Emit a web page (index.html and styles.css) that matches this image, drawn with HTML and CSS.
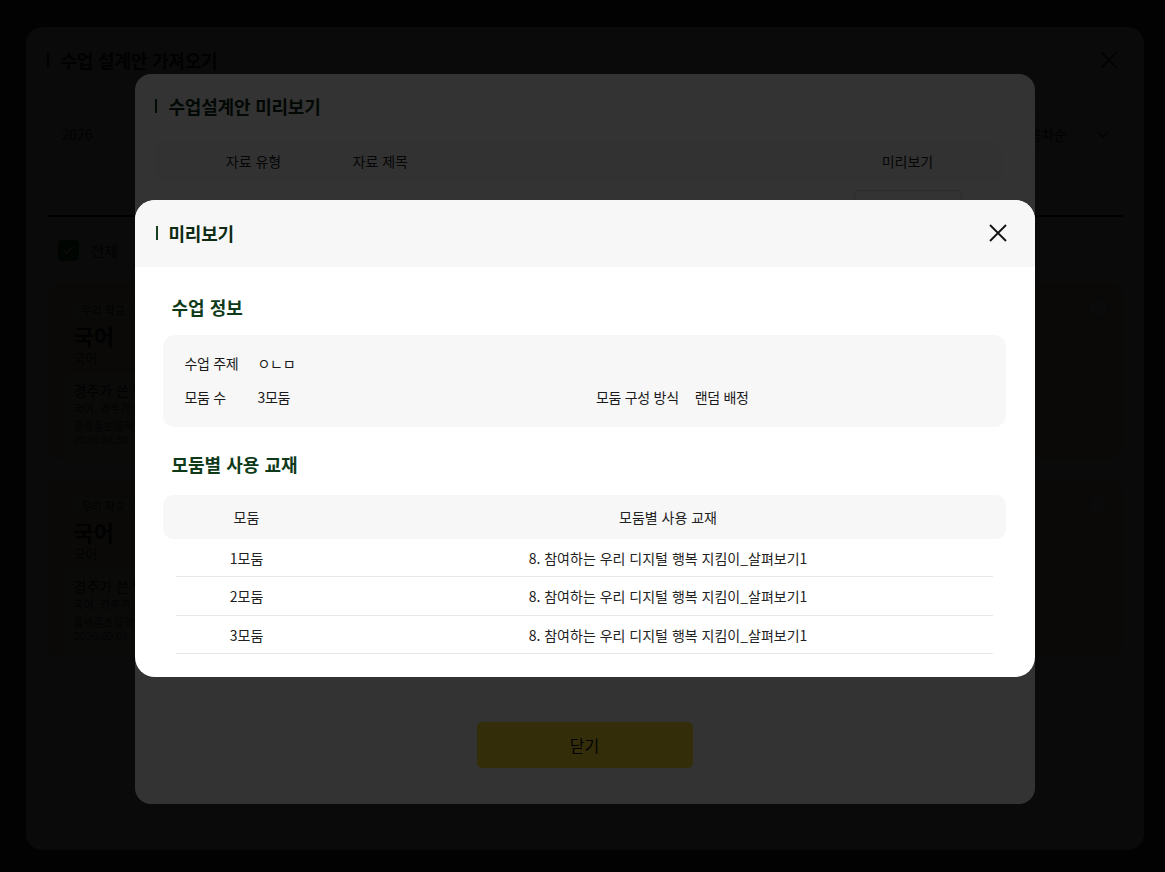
FILE: index.html
```html
<!DOCTYPE html>
<html lang="ko">
<head>
    <meta charset="UTF-8">
    <meta name="viewport" content="width=device-width, initial-scale=1.0">
    <title>수업 설계안 가져오기</title>
    <link rel="stylesheet" href="styles.css">
</head>
<body>

    <!-- 1단계: 수업 설계안 가져오기 -->
    <div class="dim">
        <section class="modal modal-import">
            <div class="modal-head">
                <h2 class="modal-title">수업 설계안 가져오기</h2>
                <button class="btn-close">
                    <svg width="18" height="18" viewBox="0 0 18 18"><path d="M1 1L17 17M17 1L1 17" stroke="#222" stroke-width="1.6" fill="none"/></svg>
                </button>
            </div>

            <div class="filters">
                <div class="select select-year">
                    <span>2026</span>
                    <svg width="14" height="14" viewBox="0 0 14 14"><path d="M2 5l5 5 5-5" stroke="#444" stroke-width="1.4" fill="none"/></svg>
                </div>
                <div class="select select-sort">
                    <span>오름차순</span>
                    <svg width="14" height="14" viewBox="0 0 14 14"><path d="M2 5l5 5 5-5" stroke="#444" stroke-width="1.4" fill="none"/></svg>
                </div>
            </div>

            <div class="tab-line"></div>

            <label class="check-all">
                <span class="check-box">
                    <svg width="14" height="14" viewBox="0 0 14 14"><path d="M2.5 7.2l3 3 6-6.4" stroke="#fff" stroke-width="1.8" fill="none"/></svg>
                </span>
                전체
            </label>

            <ul class="plan-list">
                <li class="plan-card">
                    <span class="plan-tag">우리 학교</span>
                    <p class="plan-subject">국어</p>
                    <p class="plan-sub">국어</p>
                    <div class="plan-detail">
                        <p class="plan-name">경주가 쓴 편지 읽기</p>
                        <p class="plan-desc">국어. 경주가 쓴 편지를 읽고 마음 나누기</p>
                        <p class="plan-meta">플랫폼초등학교<br>2026.04.30</p>
                    </div>
                    <span class="plan-radio"></span>
                </li>
                <li class="plan-card">
                    <span class="plan-tag">우리 학교</span>
                    <p class="plan-subject">국어</p>
                    <p class="plan-sub">국어</p>
                    <div class="plan-detail">
                        <p class="plan-name">경주가 쓴 일기 읽기</p>
                        <p class="plan-desc">국어. 경주가 쓴 일기를 읽고 생각 말하기</p>
                        <p class="plan-meta">플랫폼초등학교<br>2026.05.01</p>
                    </div>
                    <span class="plan-radio"></span>
                </li>
            </ul>
        </section>
    </div>

    <!-- 2단계: 수업설계안 미리보기 -->
    <div class="dim">
        <section class="modal modal-plan">
            <div class="plan-body">
                <h2 class="modal-title">수업설계안 미리보기</h2>

                <div class="file-head">
                    <span class="col-type">자료 유형</span>
                    <span class="col-title">자료 제목</span>
                    <span class="col-view">미리보기</span>
                </div>
                <div class="file-row">
                    <span class="col-type">교과서</span>
                    <span class="col-title">8. 참여하는 우리 디지털 행복 지킴이_살펴보기1</span>
                    <span class="col-view"><button class="btn-outline">미리보기</button></span>
                </div>
            </div>
            <div class="plan-foot">
                <button class="btn-yellow">닫기</button>
            </div>
        </section>
    </div>

    <!-- 3단계: 미리보기 -->
    <div class="dim">
        <section class="modal modal-preview">
            <div class="preview-head">
                <h2 class="modal-title">미리보기</h2>
                <button class="btn-close">
                    <svg width="18" height="18" viewBox="0 0 18 18"><path d="M1 1L17 17M17 1L1 17" stroke="#111" stroke-width="1.8" fill="none"/></svg>
                </button>
            </div>

            <div class="preview-body">
                <h3 class="section-title">수업 정보</h3>
                <div class="info-box">
                    <div class="info-item">
                        <span class="info-label">수업 주제</span>
                        <span class="info-value">ㅇㄴㅁ</span>
                    </div>
                    <div class="info-item"></div>
                    <div class="info-item">
                        <span class="info-label">모둠 수</span>
                        <span class="info-value">3모둠</span>
                    </div>
                    <div class="info-item">
                        <span class="info-label">모둠 구성 방식</span>
                        <span class="info-value">랜덤 배정</span>
                    </div>
                </div>

                <h3 class="section-title section-gap">모둠별 사용 교재</h3>
                <div class="group-table">
                    <div class="group-head">
                        <span>모둠</span>
                        <span>모둠별 사용 교재</span>
                    </div>
                    <div class="group-row">
                        <span>1모둠</span>
                        <span>8. 참여하는 우리 디지털 행복 지킴이_살펴보기1</span>
                    </div>
                    <div class="group-row">
                        <span>2모둠</span>
                        <span>8. 참여하는 우리 디지털 행복 지킴이_살펴보기1</span>
                    </div>
                    <div class="group-row">
                        <span>3모둠</span>
                        <span>8. 참여하는 우리 디지털 행복 지킴이_살펴보기1</span>
                    </div>
                </div>
            </div>
        </section>
    </div>

</body>
</html>
```

FILE: styles.css
```css
* {
    margin: 0;
    padding: 0;
    box-sizing: border-box;
    font-family: "Noto Sans CJK KR", "Noto Sans", sans-serif;
}

body {
    background-color: #fff;
    color: #222;
}

ul {
    list-style: none;
}

button {
    border: none;
    background: none;
    cursor: pointer;
}

/* 모달 뒤 어두운 배경 */
.dim {
    position: fixed;
    top: 0;
    left: 0;
    width: 100%;
    height: 100%;
    background-color: rgba(0, 0, 0, 0.8);
    display: flex;
    align-items: center;
    justify-content: center;
    padding: 5px 0 0 4px;
}

.modal {
    background-color: #fff;
    overflow: hidden;
}

.modal-title {
    display: flex;
    align-items: center;
    font-size: 18px;
    font-weight: 700;
    line-height: 24px;
    color: #0e2a13;
    letter-spacing: -0.2px;
}

.modal-title::before {
    content: "";
    width: 2px;
    height: 14px;
    background-color: #173f1f;
    margin-right: 12px;
}

.btn-close {
    width: 18px;
    height: 18px;
    display: flex;
}

/* 수업 설계안 가져오기 */
.modal-import {
    width: 1118px;
    height: 823px;
    border-radius: 16px;
    padding: 21px 21px 0 21px;
}

.modal-import .modal-head {
    display: flex;
    justify-content: space-between;
    align-items: center;
    height: 24px;
}

.modal-import .btn-close {
    margin-right: 5px;
}

.filters {
    display: flex;
    justify-content: space-between;
    margin-top: 44px;
}

.select {
    height: 36px;
    border: 1px solid #e3e3e3;
    border-radius: 6px;
    display: flex;
    align-items: center;
    justify-content: space-between;
    padding: 0 12px 0 14px;
    font-size: 14px;
    color: #333;
}

.select-year {
    width: 200px;
}

.select-sort {
    width: 122px;
}

.tab-line {
    height: 2px;
    background-color: #173f1f;
    margin-top: 63px;
}

.check-all {
    display: flex;
    align-items: center;
    gap: 12px;
    margin-top: 22px;
    padding-left: 11px;
    font-size: 15px;
    color: #333;
    height: 22px;
}

.check-box {
    width: 21px;
    height: 21px;
    border-radius: 4px;
    background-color: #1f8a3e;
    display: flex;
    align-items: center;
    justify-content: center;
}

.plan-list {
    display: flex;
    flex-direction: column;
    gap: 20px;
    margin-top: 22px;
}

.plan-card {
    position: relative;
    height: 176px;
    background-color: #fff6cf;
    border: 1px solid #f3e39a;
    border-radius: 12px;
    padding: 12px 16px;
}

.plan-tag {
    display: inline-block;
    font-size: 11px;
    line-height: 16px;
    padding: 0 9px;
    background-color: #fffbe9;
    border-radius: 4px;
    color: #444;
    margin-left: 9px;
}

.plan-subject {
    font-size: 22px;
    font-weight: 700;
    line-height: 30px;
    padding-left: 10px;
}

.plan-sub {
    font-size: 13px;
    line-height: 16px;
    padding-left: 10px;
    color: #444;
}

.plan-detail {
    margin-top: 6px;
    background-color: #fffbe8;
    border-radius: 8px;
    padding: 8px 10px;
    width: 260px;
    height: 90px;
}

.plan-name {
    font-size: 14px;
    line-height: 20px;
}

.plan-desc {
    font-size: 11px;
    line-height: 16px;
    color: #555;
}

.plan-meta {
    margin-top: 4px;
    font-size: 11px;
    line-height: 13px;
    color: #666;
}

.plan-radio {
    position: absolute;
    top: 14px;
    right: 13px;
    width: 21px;
    height: 21px;
    border: 1px solid #bbb;
    border-radius: 50%;
    background-color: #fff;
}

/* 수업설계안 미리보기 */
.modal-plan {
    width: 900px;
    height: 730px;
    border-radius: 16px;
    display: flex;
    flex-direction: column;
}

.plan-body {
    flex: 1;
    padding: 20px 33px 0 20px;
}

.file-head,
.file-row {
    display: grid;
    grid-template-columns: 198px 1fr 140px;
    padding-right: 24px;
    align-items: center;
    font-size: 14px;
}

.file-head {
    margin-top: 23px;
    height: 40px;
    background-color: #f7f7f7;
    border-radius: 8px;
}

.file-row {
    height: 60px;
    border-bottom: 1px solid #eee;
}

.col-type,
.col-view {
    text-align: center;
}

.btn-outline {
    width: 108px;
    height: 40px;
    border: 1px solid #cfcfcf;
    border-radius: 6px;
    font-size: 13px;
    color: #333;
    background-color: #fff;
}

.plan-foot {
    display: flex;
    justify-content: center;
    padding-bottom: 36px;
}

.btn-yellow {
    width: 216px;
    height: 46px;
    border-radius: 5px;
    background-color: #ffe033;
    font-size: 16px;
    color: #111;
}

/* 미리보기 */
.modal-preview {
    width: 900px;
    border-radius: 20px;
}

.preview-head {
    height: 67px;
    background-color: #f7f7f7;
    display: flex;
    align-items: center;
    justify-content: space-between;
    padding: 0 28px 0 21px;
}

.preview-head .modal-title::before {
    margin-right: 11px;
}

.preview-body {
    padding: 27px 29px 23px 28px;
}

.section-title {
    font-size: 18px;
    font-weight: 700;
    line-height: 26px;
    color: #0f3a1a;
    padding-left: 9px;
    margin-bottom: 15px;
}

.section-gap {
    margin-bottom: 18px;
}

.info-box {
    display: grid;
    grid-template-columns: 1fr 1fr;
    column-gap: 24px;
    row-gap: 14px;
    background-color: #f7f7f7;
    border-radius: 12px;
    padding: 18px 22px 20px;
    margin-bottom: 24px;
}

.info-item {
    display: flex;
    align-items: center;
    font-size: 14px;
    line-height: 20px;
    letter-spacing: -0.3px;
    color: #1a1a1a;
}

.info-label {
    min-width: 57px;
    margin-right: 16px;
}

.group-table {
    font-size: 14px;
    color: #222;
}

.group-head,
.group-row {
    display: grid;
    grid-template-columns: 168px 1fr;
    align-items: center;
    text-align: center;
}

.group-head {
    height: 44px;
    background-color: #f7f7f7;
    border-radius: 10px;
}

.group-row {
    height: 38.5px;
    padding-bottom: 1px;
    background: linear-gradient(#e8e8e8, #e8e8e8) no-repeat bottom center / calc(100% - 26px) 1px;
}
```
